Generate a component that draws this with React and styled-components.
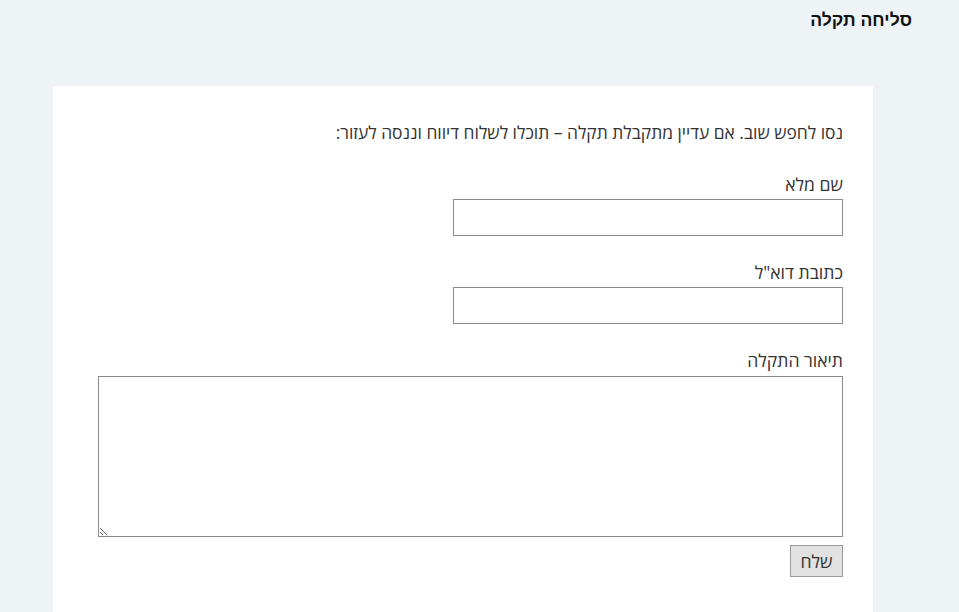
import React from "react";
import styled, { createGlobalStyle } from "styled-components";

const GlobalStyle = createGlobalStyle`
    html, body {
        margin: 0;
        padding: 0;
        background: #eef3f6;
    }
    body {
        font-family: "Open Sans", "DejaVu Sans", sans-serif;
        color: #333;
    }
`;

const App = () => {
    return (
    <PageStyled dir="rtl">
        <GlobalStyle />
        <h1 className="page-title">סליחה תקלה</h1>
        <Card>
            <p className="intro">נסו לחפש שוב. אם עדיין מתקבלת תקלה – תוכלו לשלוח דיווח וננסה לעזור:</p>
            <Field>
                <label htmlFor="fullname">שם מלא</label>
                <TextInput id="fullname" type="text" />
            </Field>
            <Field>
                <label htmlFor="email">כתובת דוא"ל</label>
                <TextInput id="email" type="email" />
            </Field>
            <Field $last>
                <label htmlFor="desc">תיאור התקלה</label>
                <TextArea id="desc" />
            </Field>
            <SendButton type="button">שלח</SendButton>
        </Card>
    </PageStyled>
    );
}

const PageStyled = styled.div`
    min-height: 612px;

    .page-title {
        margin: 0;
        padding: 8px 47px 0 0;
        height: 86px;
        box-sizing: border-box;
        font-family: "Liberation Sans", Arial, sans-serif;
        font-size: 17.6px;
        font-weight: 700;
        color: #111;
        line-height: 24px;
    }
`;

const Card = styled.div`
    background: #fff;
    margin: 0 86px 0 53px;
    min-height: 526px;
    box-sizing: border-box;
    padding: 34px 30px 0 45px;
    display: flex;
    flex-direction: column;
    align-items: flex-start;

    .intro {
        margin: 0 0 28px;
        font-size: 17.4px;
        line-height: 24px;
    }
`;

const Field = styled.div`
    display: flex;
    flex-direction: column;
    align-items: flex-start;
    width: 100%;
    margin-bottom: ${props => props.$last ? "8px" : "24px"};

    label {
        font-size: 17.6px;
        line-height: 24px;
        margin-bottom: ${props => props.$last ? "4px" : "3px"};
    }
`;

const TextInput = styled.input`
    width: 390px;
    height: 37px;
    box-sizing: border-box;
    border: 1px solid #8a8a8a;
    background: #fff;
    font: inherit;
    margin: 0;
`;

const TextArea = styled.textarea`
    display: block;
    width: 100%;
    height: 161px;
    box-sizing: border-box;
    border: 1px solid #8a8a8a;
    font: inherit;
    margin: 0;
    resize: both;
`;

const SendButton = styled.button`
    width: 53px;
    height: 32px;
    border: 1px solid #9a9a9a;
    background: #e1e1e1;
    color: #333;
    font-family: "Open Sans", sans-serif;
    font-size: 17.6px;
    padding: 0;
`;

export default App;
